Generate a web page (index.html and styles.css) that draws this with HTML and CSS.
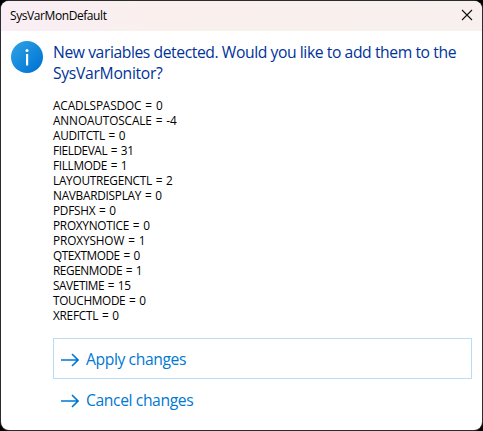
FILE: index.html
```
<!DOCTYPE html>
<html lang="en">
<head>
<meta charset="utf-8">
<title>SysVarMonDefault</title>
<link rel="stylesheet" href="styles.css">
</head>
<body>
<div class="dialog">
  <header class="titlebar">
    <span class="title">SysVarMonDefault</span>
    <svg class="close" width="12" height="12" viewBox="0 0 12 12"><path d="M1 1L11 11M11 1L1 11"/></svg>
  </header>
  <main class="content">
    <svg class="info" width="32" height="32" viewBox="0 0 32 32">
      <defs><linearGradient id="blue" x1="0" y1="0" x2="1" y2="1"><stop offset="0.1" stop-color="#2aa0e4"/><stop offset="0.9" stop-color="#0074d4"/></linearGradient></defs>
      <circle cx="16" cy="16" r="16" fill="url(#blue)"/>
      <circle cx="16" cy="9.5" r="1.5" fill="#fff"/>
      <path d="M15 13H17.2V24.5H15Z" fill="#fff"/>
    </svg>
    <div class="body">
      <h1 class="heading"><span class="line-one">New variables detected. Would you like to add them to the</span><br><span class="line-two">SysVarMonitor?</span></h1>
      <ul class="variables">
        <li class="loose">ACADLSPASDOC = 0</li>
        <li class="loose">ANNOAUTOSCALE = -4</li>
        <li>AUDITCTL = 0</li>
        <li class="tight">FIELDEVAL = 31</li>
        <li>FILLMODE = 1</li>
        <li class="medium">LAYOUTREGENCTL = 2</li>
        <li class="medium">NAVBARDISPLAY = 0</li>
        <li class="medium">PDFSHX = 0</li>
        <li class="medium">PROXYNOTICE = 0</li>
        <li class="loose">PROXYSHOW = 1</li>
        <li class="tight">QTEXTMODE = 0</li>
        <li class="tight">REGENMODE = 1</li>
        <li class="tight">SAVETIME = 15</li>
        <li>TOUCHMODE = 0</li>
        <li class="medium">XREFCTL = 0</li>
      </ul>
      <div class="actions">
        <button class="command focused"><svg width="18" height="14" viewBox="0 0 18 14"><path d="M0 7H17M11 1L17 7L11 13"/></svg><span>Apply changes</span></button>
        <button class="command"><svg width="18" height="14" viewBox="0 0 18 14"><path d="M0 7H17M11 1L17 7L11 13"/></svg><span>Cancel changes</span></button>
      </div>
    </div>
  </main>
</div>
</body>
</html>
```
FILE: styles.css
```
* { box-sizing: border-box; }
body {
  margin: 0;
  height: 431px;
  padding: 1px;
  background: #000;
  font-family: "Open Sans", "Noto Sans", sans-serif;
  overflow: hidden;
}
.dialog {
  height: 429px;
  background: #fff;
  border-radius: 8px;
  box-shadow: 0 0 0 1px #2c2c2e;
  overflow: hidden;
}
.titlebar {
  height: 30px;
  padding: 0 9px 2px 9px;
  display: flex;
  align-items: center;
  justify-content: space-between;
  background: linear-gradient(90deg, #f9eef5, #f9f0ed 35%, #f8f0ee);
}
.title { font-size: 12px; letter-spacing: -0.42px; color: #000; }
.close { fill: none; stroke: #111; stroke-width: 1.1; }
.content { display: flex; padding: 10px 10px 0; }
.info { flex: none; margin-right: 10px; }
.body { flex: 1; min-width: 0; }
.heading {
  margin: 1px 0 0;
  font-size: 15.7px;
  line-height: 21px;
  font-weight: 400;
  color: #003399;
  white-space: nowrap;
}
.line-one { letter-spacing: -0.42px; }
.line-two { letter-spacing: -0.3px; }
.variables {
  list-style: none;
  margin: 14px 0 0;
  padding: 0;
  font-size: 11.8px;
  line-height: 15px;
  letter-spacing: -0.33px;
  word-spacing: 1px;
  color: #000;
}
.loose { letter-spacing: -0.11px; }
.medium { letter-spacing: -0.25px; }
.tight { letter-spacing: -0.41px; }
.actions { margin-top: 15px; }
.command {
  width: 419px;
  height: 41px;
  display: flex;
  align-items: center;
  padding: 0 0 0 7px;
  border: 1px solid transparent;
  background: #fff;
  color: #0078d4;
  font: 15.7px "Open Sans", "Noto Sans", sans-serif;
  letter-spacing: -0.4px;
}
.command svg { flex: none; margin: 3px 7px 0 0; fill: none; stroke: #0078d4; stroke-width: 1.6; }
.focused { border-color: #b8ddf8; }
```
